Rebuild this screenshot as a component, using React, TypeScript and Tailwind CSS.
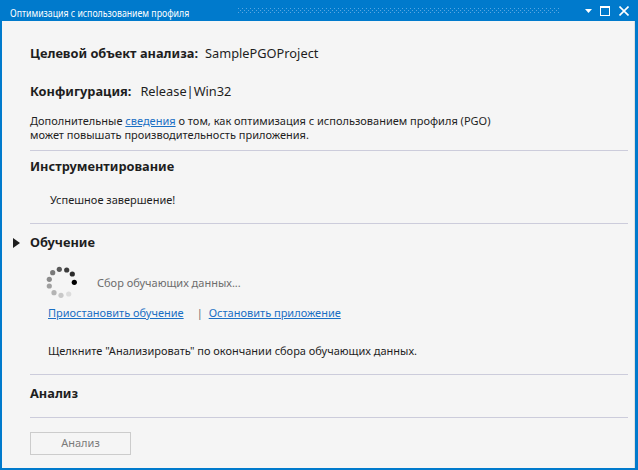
import React from 'react'

const FONT = "font-['Noto_Sans','Open_Sans',sans-serif]"

// spinner dots: [cx, cy, fill]
const DOTS: [number, number, string][] = [
  [59.3, 269.3, '#5a5a5a'],
  [66.7, 270, '#3c3c3c'],
  [72.3, 274, '#2a2a2a'],
  [74.3, 282.3, '#000000'],
  [52.7, 272.7, '#7a7a7a'],
  [49.3, 279.3, '#8c8c8c'],
  [49.3, 286, '#a0a0a0'],
  [54, 292.7, '#b4b4b4'],
  [61, 295.3, '#c8c8c8'],
  [68.7, 294, '#dcdcdc'],
]

function Spinner() {
  return (
    <svg width="34" height="34" viewBox="45 266 34 34" className="shrink-0">
      {DOTS.map(([x, y, c], i) => (
        <circle key={i} cx={x} cy={y} r="2.6" fill={c} />
      ))}
    </svg>
  )
}

function Rule() {
  return <div className="h-px bg-[#ccccdb]" />
}

export default function App() {
  return (
    <div className={`w-[638px] h-[470px] bg-[#007acc] flex flex-col ${FONT}`}>
      {/* title bar */}
      <div className="h-[21px] flex items-center pl-[10px] pr-[9px] text-white">
        <div className="w-[178px] shrink-0">
          <span className="inline-block text-[11.5px] leading-none whitespace-nowrap scale-x-[0.76] origin-left">
            Оптимизация с использованием профиля
          </span>
        </div>
        <svg className="flex-1 h-[6px] ml-[50px] mr-[26px]">
          <defs>
            <pattern id="grip" width="4" height="4" patternUnits="userSpaceOnUse">
              <rect x="0" y="0" width="1" height="1" fill="#5aa6e0" />
              <rect x="2" y="2" width="1" height="1" fill="#5aa6e0" />
            </pattern>
          </defs>
          <rect width="100%" height="100%" fill="url(#grip)" />
        </svg>
        <div className="flex items-center gap-[8px]">
          <svg width="7" height="4" viewBox="0 0 7 4">
            <path d="M0 0h7L3.5 4z" fill="white" />
          </svg>
          <svg width="10" height="10" viewBox="0 0 10 10">
            <rect x="0.5" y="0.5" width="9" height="9" fill="none" stroke="white" />
            <rect x="0" y="0" width="10" height="2" fill="white" />
          </svg>
          <svg width="10" height="10" viewBox="0 0 10 10" className="ml-[1px]">
            <path d="M0.5 0.5l9 9M9.5 0.5l-9 9" stroke="white" strokeWidth="1.6" />
          </svg>
        </div>
      </div>

      {/* body */}
      <div className="flex-1 ml-[2px] mr-[3px] mb-[2px] bg-[#f5f5f5] border-r border-[#e0e0e0] pl-[28px] pr-[6px] text-[#1e1e1e] flex flex-col">
        <div className="mt-[23px] flex items-baseline text-[12.8px] leading-[19px]">
          <span className="font-bold">Целевой объект анализа:</span>
          <span className="ml-[7px]">SamplePGOProject</span>
        </div>
        <div className="mt-[19px] flex items-baseline text-[12.8px] leading-[19px]">
          <span className="font-bold">Конфигурация:</span>
          <span className="ml-[9px]">Release|Win32</span>
        </div>
        <p className="mt-[13px] text-[11px] leading-[14px]">
          Дополнительные <span className="text-[#1a6fc4] underline">сведения</span> о том, как оптимизация с использованием профиля (PGO)
          <br />
          может повышать производительность приложения.
        </p>
        <div className="mt-[8px]">
          <Rule />
        </div>

        <div className="mt-[6px] text-[12.8px] leading-[19px] font-bold">Инструментирование</div>
        <div className="mt-[16px] pl-[20px] text-[11px] leading-[16px]">Успешное завершение!</div>
        <div className="mt-[15px]">
          <Rule />
        </div>

        <div className="mt-[9px] relative text-[12.8px] leading-[19px] font-bold">
          <svg width="7" height="10" viewBox="0 0 7 10" className="absolute left-[-17px] top-[5px]">
            <path d="M0 0l7 5-7 5z" fill="#1e1e1e" />
          </svg>
          Обучение
        </div>
        <div className="mt-[14px] pl-[15px] flex items-center">
          <Spinner />
          <span className="ml-[18px] text-[11px] leading-[16px] text-[#6d6d6d]">Сбор обучающих данных...</span>
        </div>
        <div className="mt-[5px] pl-[18px] flex items-center text-[11px] leading-[16px]">
          <span className="text-[#1a6fc4] underline">Приостановить обучение</span>
          <span className="ml-[13px] text-[#6d6d6d]">|</span>
          <span className="ml-[6px] text-[#1a6fc4] underline">Остановить приложение</span>
        </div>
        <div className="mt-[22px] pl-[18px] text-[11px] leading-[16px]">
          Щелкните "Анализировать" по окончании сбора обучающих данных.
        </div>
        <div className="mt-[15px]">
          <Rule />
        </div>

        <div className="mt-[9px] text-[12.8px] leading-[19px] font-bold">Анализ</div>
        <div className="mt-[14px]">
          <Rule />
        </div>
        <div className="mt-[14px]">
          <button className="w-[101px] h-[23px] border border-[#cccccc] bg-[#f5f5f5] text-[11px] text-[#7a7a7a] flex items-center justify-center">
            Анализ
          </button>
        </div>
      </div>
    </div>
  )
}
